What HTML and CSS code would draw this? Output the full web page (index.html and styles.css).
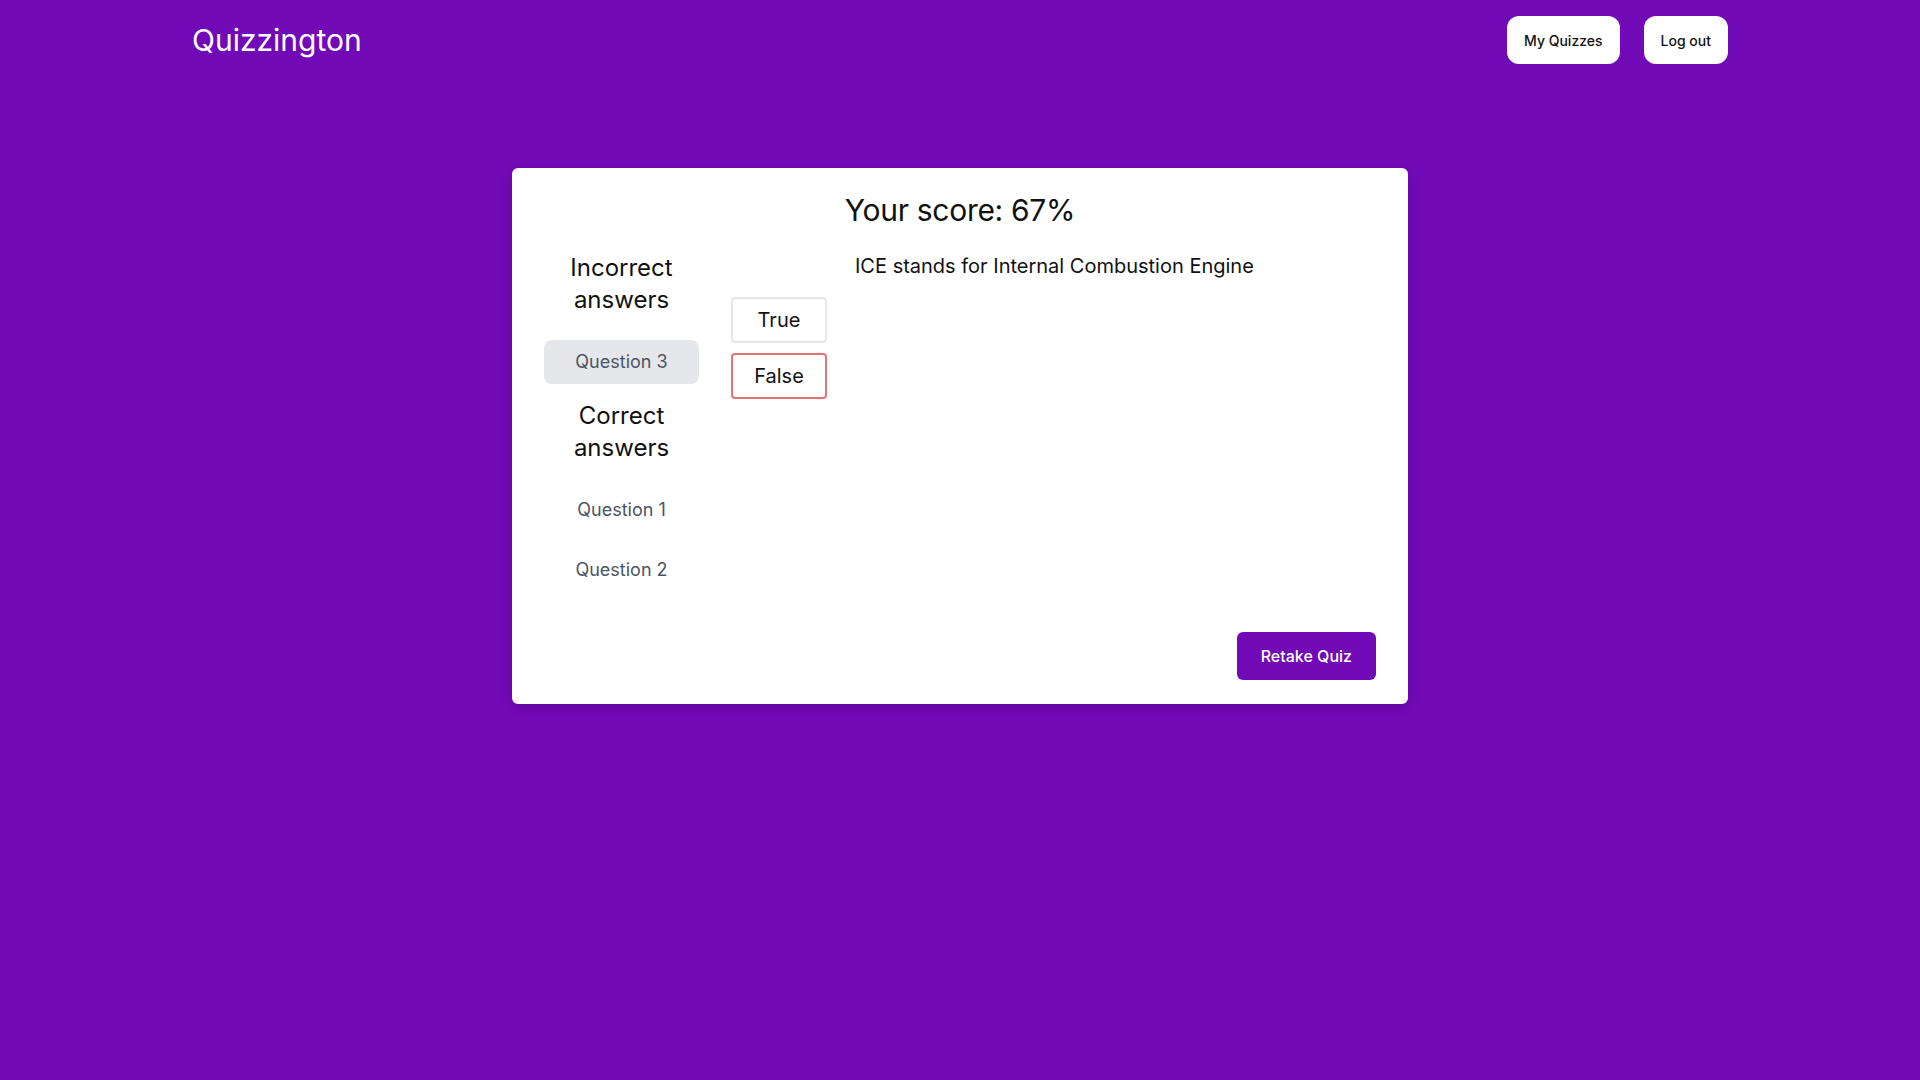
FILE: index.html
```html
<!DOCTYPE html>
<html lang="en">
<head>
<meta charset="utf-8">
<title>Quizzington</title>
<link rel="stylesheet" href="styles.css">
</head>
<body>
<header class="topbar">
  <div class="brand">Quizzington</div>
  <nav class="nav">
    <button class="nav-btn">My Quizzes</button>
    <button class="nav-btn">Log out</button>
  </nav>
</header>
<main class="main">
  <section class="card">
    <h1 class="score">Your score: 67%</h1>
    <div class="results">
      <aside class="sidebar">
        <h2 class="group-title">Incorrect answers</h2>
        <div class="q-list">
          <div class="q-item active">Question 3</div>
        </div>
        <h2 class="group-title">Correct answers</h2>
        <div class="q-list">
          <div class="q-item">Question 1</div>
          <div class="q-item">Question 2</div>
        </div>
      </aside>
      <div class="options">
        <div class="option">True</div>
        <div class="option wrong">False</div>
      </div>
      <p class="question">ICE stands for Internal Combustion Engine</p>
    </div>
    <div class="card-footer">
      <button class="retake">Retake Quiz</button>
    </div>
  </section>
</main>
</body>
</html>
```

FILE: styles.css
```css
* { box-sizing: border-box; }
html, body { margin: 0; padding: 0; }
body {
  background: #7209b7;
  font-family: Inter, "Noto Sans", Arial, sans-serif;
  min-height: 1080px;
  color: #111;
}
.topbar {
  width: 1536px;
  margin: 0 auto;
  display: flex;
  align-items: center;
  justify-content: space-between;
  padding: 16px 0;
}
.brand {
  color: #fff;
  font-size: 30px;
  line-height: 36px;
}
.nav { display: flex; gap: 24px; }
.nav-btn {
  font-family: inherit;
  background: #fff;
  border: none;
  border-radius: 12px;
  height: 48px;
  padding: 0 17px;
  font-size: 14px;
  font-weight: 500;
  color: #111;
}
.main { padding-top: 88px; }
.card {
  width: 896px;
  margin: 0 auto;
  background: #fff;
  border-radius: 6px;
  padding: 24px 32px 24px 32px;
  box-shadow: 0 4px 12px rgba(0,0,0,0.15);
}
.score {
  margin: 0;
  text-align: center;
  font-size: 30px;
  line-height: 36px;
  font-weight: 400;
  letter-spacing: -0.3px;
  color: #111;
}
.results {
  display: flex;
  margin-top: 24px;
}
.sidebar {
  width: 155px;
  display: flex;
  flex-direction: column;
}
.group-title {
  margin: 0 0 24px;
  text-align: center;
  font-size: 24px;
  line-height: 32px;
  font-weight: 400;
  color: #111;
}
.q-list {
  display: flex;
  flex-direction: column;
  gap: 16px;
  margin-bottom: 16px;
}
.q-list:last-child { margin-bottom: 0; }
.q-item {
  height: 44px;
  line-height: 44px;
  text-align: center;
  font-size: 18px;
  color: #4b5563;
  border-radius: 8px;
}
.q-item.active { background: #e5e7eb; }
.options {
  margin-left: 32px;
  padding-top: 45px;
  display: flex;
  flex-direction: column;
  gap: 10px;
}
.option {
  width: 96px;
  height: 46px;
  border: 2px solid #e5e7eb;
  border-radius: 4px;
  display: flex;
  align-items: center;
  justify-content: center;
  font-size: 20px;
  color: #111;
}
.option.wrong { border-color: #e57373; }
.question {
  margin: 0 0 0 28px;
  font-size: 20px;
  line-height: 28px;
  color: #111;
}
.card-footer {
  display: flex;
  justify-content: flex-end;
  margin-top: 40px;
}
.retake {
  font-family: inherit;
  background: #7209b7;
  color: #fff;
  border: none;
  border-radius: 6px;
  height: 48px;
  padding: 0 24px;
  font-size: 16px;
  font-weight: 500;
}
```
